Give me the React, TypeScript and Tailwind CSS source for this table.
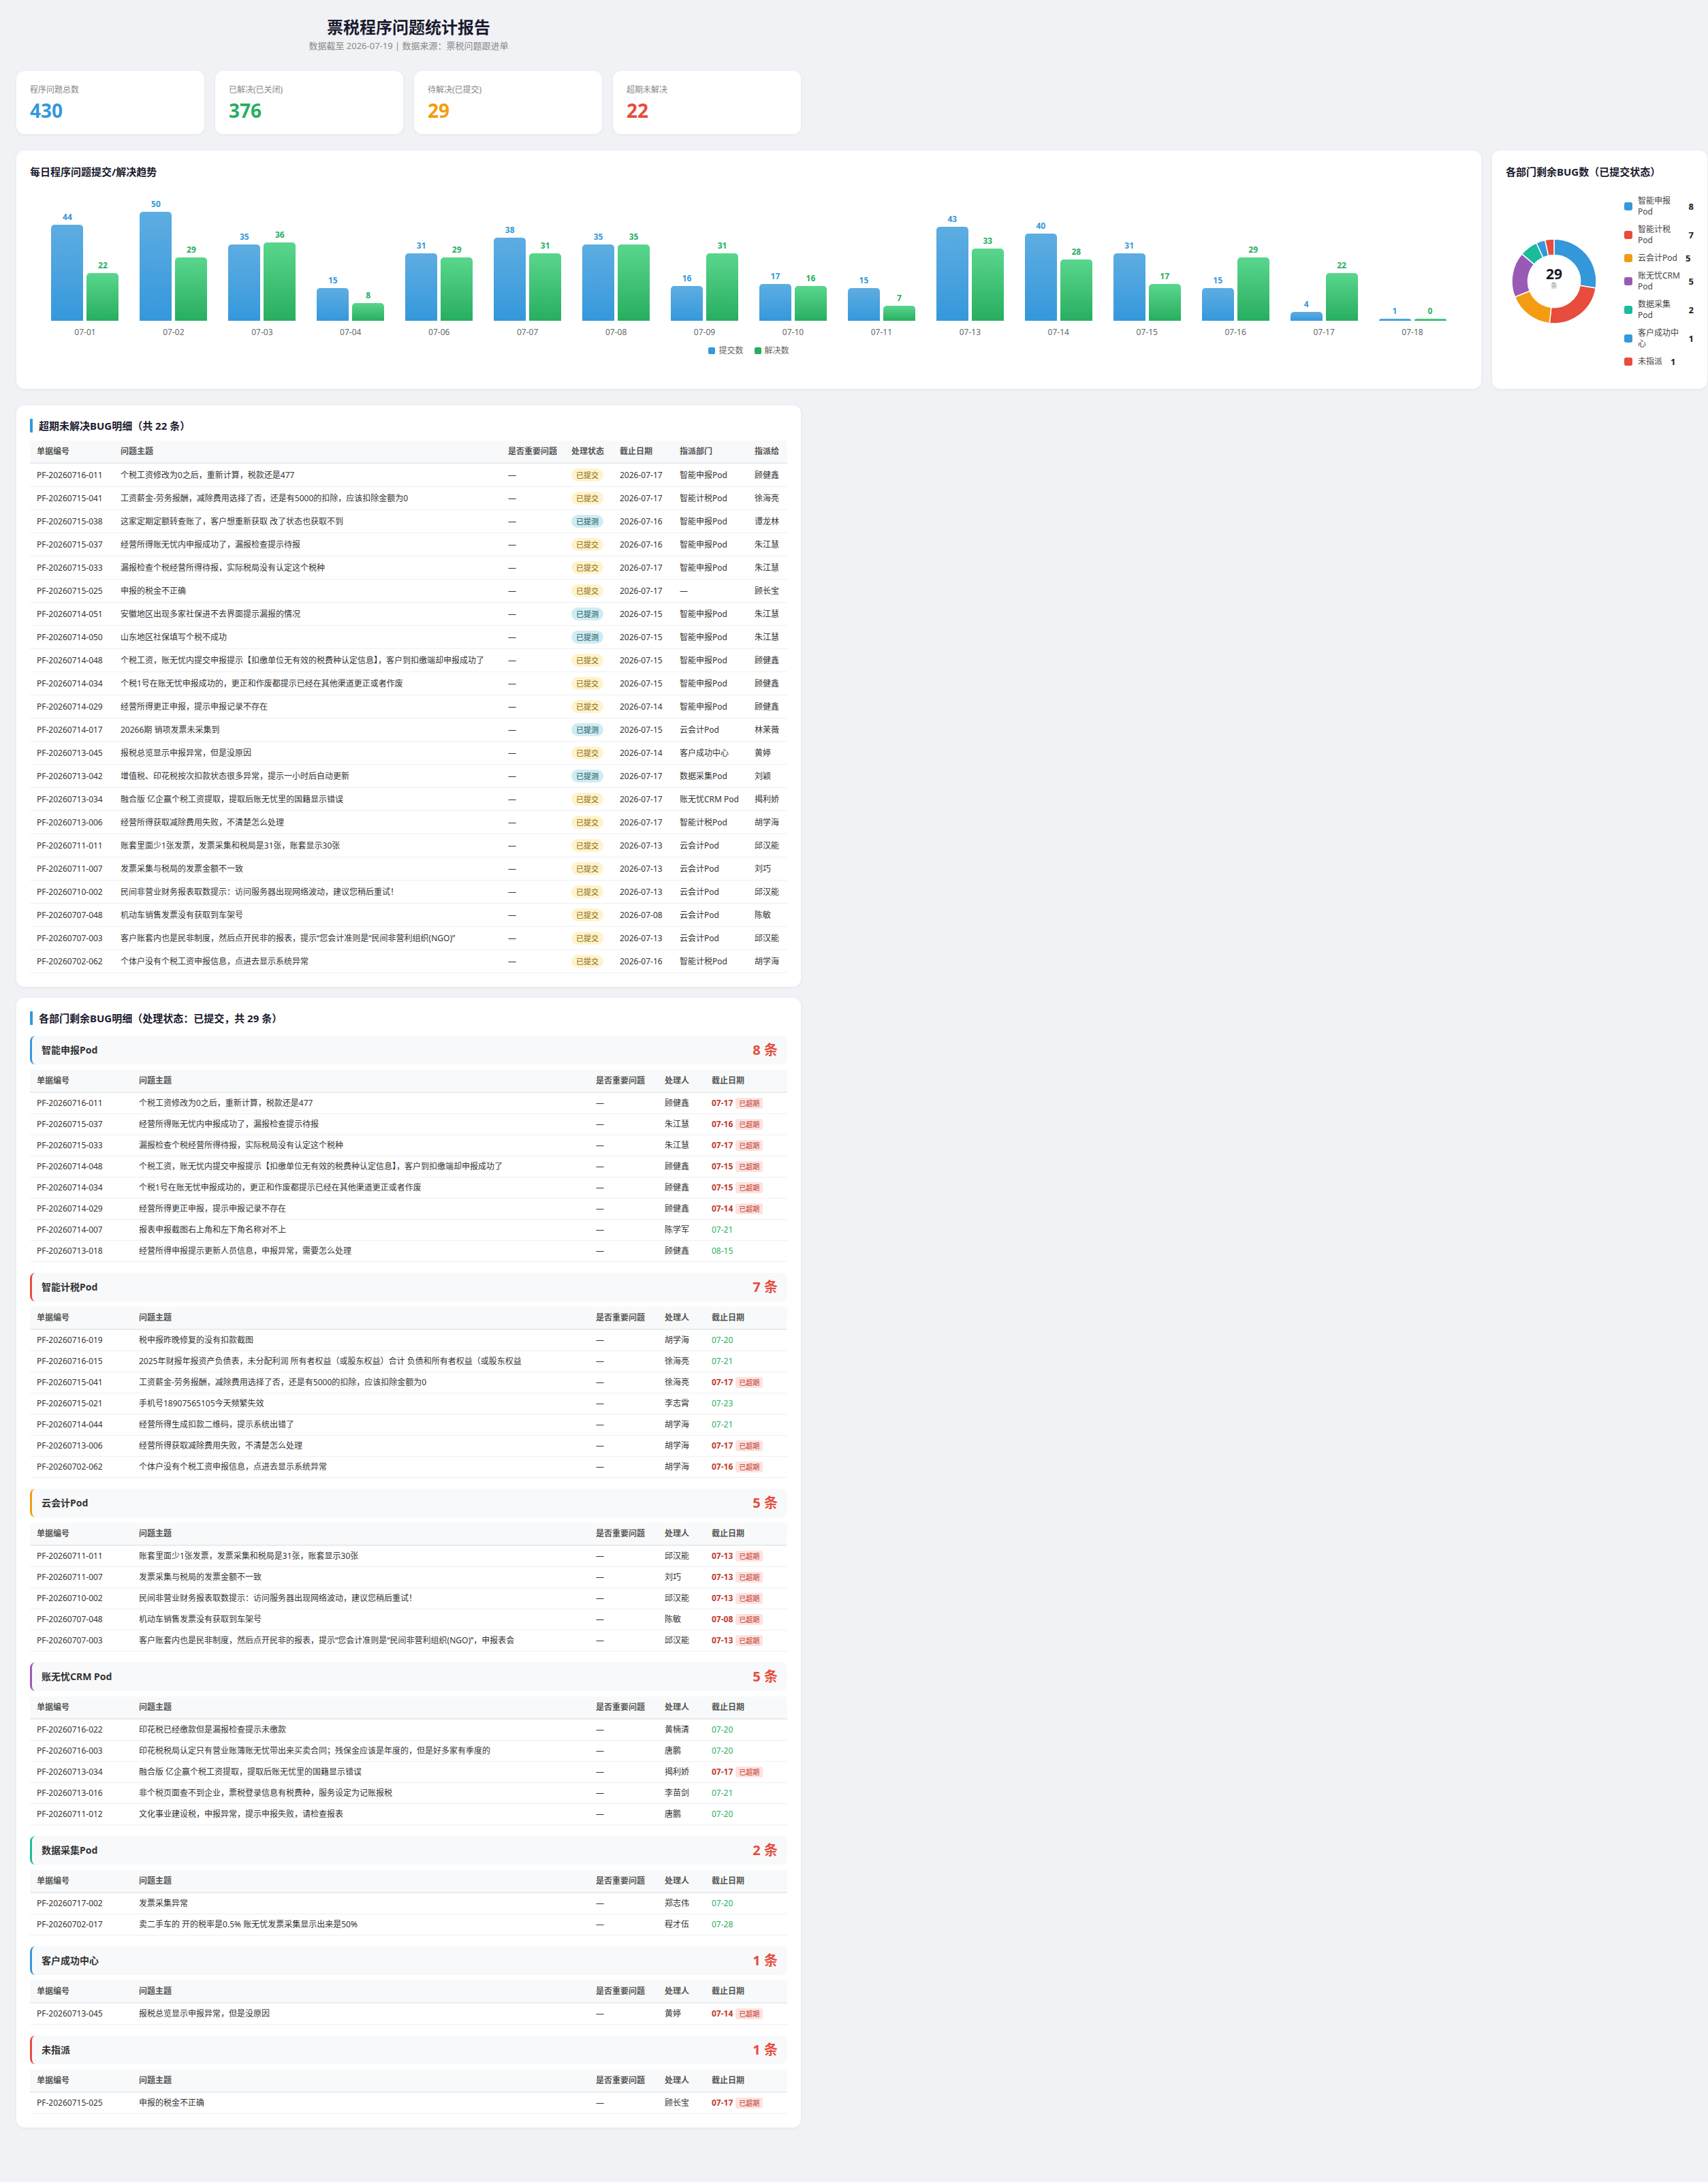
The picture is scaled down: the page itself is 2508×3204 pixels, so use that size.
import React from "react";

type ChartRow = [string, number, number];
const chartData: ChartRow[] = [
  ["07-01", 44, 22],
  ["07-02", 50, 29],
  ["07-03", 35, 36],
  ["07-04", 15, 8],
  ["07-06", 31, 29],
  ["07-07", 38, 31],
  ["07-08", 35, 35],
  ["07-09", 16, 31],
  ["07-10", 17, 16],
  ["07-11", 15, 7],
  ["07-13", 43, 33],
  ["07-14", 40, 28],
  ["07-15", 31, 17],
  ["07-16", 15, 29],
  ["07-17", 4, 22],
  ["07-18", 1, 0],
];

const depts = [
  { name: "智能申报Pod", count: 8, color: "#3498db" },
  { name: "智能计税Pod", count: 7, color: "#e74c3c" },
  { name: "云会计Pod", count: 5, color: "#f39c12" },
  { name: "账无忧CRM Pod", count: 5, color: "#9b59b6" },
  { name: "数据采集Pod", count: 2, color: "#1abc9c" },
  { name: "客户成功中心", count: 1, color: "#3498db" },
  { name: "未指派", count: 1, color: "#e74c3c" },
];

type OverRow = [string, string, "已提交" | "已提测", string, string, string];
const overdue: OverRow[] = [
  ["PF-20260716-011", "个税工资修改为0之后，重新计算，税款还是477", "已提交", "2026-07-17", "智能申报Pod", "顾健鑫"],
  ["PF-20260715-041", "工资薪金-劳务报酬，减除费用选择了否，还是有5000的扣除，应该扣除金额为0", "已提交", "2026-07-17", "智能计税Pod", "徐海亮"],
  ["PF-20260715-038", "这家定期定额转查账了，客户想重新获取 改了状态也获取不到", "已提测", "2026-07-16", "智能申报Pod", "谭龙林"],
  ["PF-20260715-037", "经营所得账无忧内申报成功了，漏报检查提示待报", "已提交", "2026-07-16", "智能申报Pod", "朱江慧"],
  ["PF-20260715-033", "漏报检查个税经营所得待报，实际税局没有认定这个税种", "已提交", "2026-07-17", "智能申报Pod", "朱江慧"],
  ["PF-20260715-025", "申报的税金不正确", "已提交", "2026-07-17", "—", "顾长宝"],
  ["PF-20260714-051", "安徽地区出现多家社保进不去界面提示漏报的情况", "已提测", "2026-07-15", "智能申报Pod", "朱江慧"],
  ["PF-20260714-050", "山东地区社保填写个税不成功", "已提测", "2026-07-15", "智能申报Pod", "朱江慧"],
  ["PF-20260714-048", "个税工资，账无忧内提交申报提示【扣缴单位无有效的税费种认定信息】，客户到扣缴端却申报成功了", "已提交", "2026-07-15", "智能申报Pod", "顾健鑫"],
  ["PF-20260714-034", "个税1号在账无忧申报成功的，更正和作废都提示已经在其他渠道更正或者作废", "已提交", "2026-07-15", "智能申报Pod", "顾健鑫"],
  ["PF-20260714-029", "经营所得更正申报，提示申报记录不存在", "已提交", "2026-07-14", "智能申报Pod", "顾健鑫"],
  ["PF-20260714-017", "20266期 销项发票未采集到", "已提测", "2026-07-15", "云会计Pod", "林茉薇"],
  ["PF-20260713-045", "报税总览显示申报异常，但是没原因", "已提交", "2026-07-14", "客户成功中心", "黄婷"],
  ["PF-20260713-042", "增值税、印花税按次扣款状态很多异常，提示一小时后自动更新", "已提测", "2026-07-17", "数据采集Pod", "刘颖"],
  ["PF-20260713-034", "融合版 亿企赢个税工资提取，提取后账无忧里的国籍显示错误", "已提交", "2026-07-17", "账无忧CRM Pod", "揭利娇"],
  ["PF-20260713-006", "经营所得获取减除费用失败，不清楚怎么处理", "已提交", "2026-07-17", "智能计税Pod", "胡学海"],
  ["PF-20260711-011", "账套里面少1张发票，发票采集和税局是31张，账套显示30张", "已提交", "2026-07-13", "云会计Pod", "邱汉能"],
  ["PF-20260711-007", "发票采集与税局的发票金额不一致", "已提交", "2026-07-13", "云会计Pod", "刘巧"],
  ["PF-20260710-002", "民间非营业财务报表取数提示：访问服务器出现网络波动，建议您稍后重试！", "已提交", "2026-07-13", "云会计Pod", "邱汉能"],
  ["PF-20260707-048", "机动车销售发票没有获取到车架号", "已提交", "2026-07-08", "云会计Pod", "陈敏"],
  ["PF-20260707-003", "客户账套内也是民非制度，然后点开民非的报表，提示“您会计准则是“民间非营利组织(NGO)”", "已提交", "2026-07-13", "云会计Pod", "邱汉能"],
  ["PF-20260702-062", "个体户没有个税工资申报信息，点进去显示系统异常", "已提交", "2026-07-16", "智能计税Pod", "胡学海"],
];

type GRow = [string, string, string, string, boolean];
const groups: { name: string; color: string; rows: GRow[] }[] = [
  {
    name: "智能申报Pod",
    color: "#3498db",
    rows: [
      ["PF-20260716-011", "个税工资修改为0之后，重新计算，税款还是477", "顾健鑫", "07-17", true],
      ["PF-20260715-037", "经营所得账无忧内申报成功了，漏报检查提示待报", "朱江慧", "07-16", true],
      ["PF-20260715-033", "漏报检查个税经营所得待报，实际税局没有认定这个税种", "朱江慧", "07-17", true],
      ["PF-20260714-048", "个税工资，账无忧内提交申报提示【扣缴单位无有效的税费种认定信息】，客户到扣缴端却申报成功了", "顾健鑫", "07-15", true],
      ["PF-20260714-034", "个税1号在账无忧申报成功的，更正和作废都提示已经在其他渠道更正或者作废", "顾健鑫", "07-15", true],
      ["PF-20260714-029", "经营所得更正申报，提示申报记录不存在", "顾健鑫", "07-14", true],
      ["PF-20260714-007", "报表申报截图右上角和左下角名称对不上", "陈学军", "07-21", false],
      ["PF-20260713-018", "经营所得申报提示更新人员信息，申报异常，需要怎么处理", "顾健鑫", "08-15", false],
    ],
  },
  {
    name: "智能计税Pod",
    color: "#e74c3c",
    rows: [
      ["PF-20260716-019", "税申报昨晚修复的没有扣款截图", "胡学海", "07-20", false],
      ["PF-20260716-015", "2025年财报年报资产负债表，未分配利润 所有者权益（或股东权益）合计 负债和所有者权益（或股东权益", "徐海亮", "07-21", false],
      ["PF-20260715-041", "工资薪金-劳务报酬，减除费用选择了否，还是有5000的扣除，应该扣除金额为0", "徐海亮", "07-17", true],
      ["PF-20260715-021", "手机号18907565105今天频繁失效", "李志霄", "07-23", false],
      ["PF-20260714-044", "经营所得生成扣款二维码，提示系统出错了", "胡学海", "07-21", false],
      ["PF-20260713-006", "经营所得获取减除费用失败，不清楚怎么处理", "胡学海", "07-17", true],
      ["PF-20260702-062", "个体户没有个税工资申报信息，点进去显示系统异常", "胡学海", "07-16", true],
    ],
  },
  {
    name: "云会计Pod",
    color: "#f39c12",
    rows: [
      ["PF-20260711-011", "账套里面少1张发票，发票采集和税局是31张，账套显示30张", "邱汉能", "07-13", true],
      ["PF-20260711-007", "发票采集与税局的发票金额不一致", "刘巧", "07-13", true],
      ["PF-20260710-002", "民间非营业财务报表取数提示：访问服务器出现网络波动，建议您稍后重试！", "邱汉能", "07-13", true],
      ["PF-20260707-048", "机动车销售发票没有获取到车架号", "陈敏", "07-08", true],
      ["PF-20260707-003", "客户账套内也是民非制度，然后点开民非的报表，提示“您会计准则是“民间非营利组织(NGO)”，申报表会", "邱汉能", "07-13", true],
    ],
  },
  {
    name: "账无忧CRM Pod",
    color: "#9b59b6",
    rows: [
      ["PF-20260716-022", "印花税已经缴款但是漏报检查提示未缴款", "黄楠清", "07-20", false],
      ["PF-20260716-003", "印花税税局认定只有营业账簿账无忧带出来买卖合同；残保金应该是年度的，但是好多家有季度的", "唐鹏", "07-20", false],
      ["PF-20260713-034", "融合版 亿企赢个税工资提取，提取后账无忧里的国籍显示错误", "揭利娇", "07-17", true],
      ["PF-20260713-016", "非个税页面查不到企业，票税登录信息有税费种，服务设定为记账报税", "李苗剑", "07-21", false],
      ["PF-20260711-012", "文化事业建设税，申报异常，提示申报失败，请检查报表", "唐鹏", "07-20", false],
    ],
  },
  {
    name: "数据采集Pod",
    color: "#1abc9c",
    rows: [
      ["PF-20260717-002", "发票采集异常", "郑志伟", "07-20", false],
      ["PF-20260702-017", "卖二手车的 开的税率是0.5% 账无忧发票采集显示出来是50%", "程才伍", "07-28", false],
    ],
  },
  {
    name: "客户成功中心",
    color: "#3498db",
    rows: [["PF-20260713-045", "报税总览显示申报异常，但是没原因", "黄婷", "07-14", true]],
  },
  {
    name: "未指派",
    color: "#e74c3c",
    rows: [["PF-20260715-025", "申报的税金不正确", "顾长宝", "07-17", true]],
  },
];

function Bar({ value, kind }: { value: number; kind: "blue" | "green" }) {
  const h = Math.max(value * 3.2, 3);
  return (
    <div className="flex w-[47px] flex-col items-center">
      <div
        className={
          kind === "blue"
            ? "mb-1 text-xs font-bold leading-[14px] text-[#3498db]"
            : "mb-1 text-xs font-bold leading-[14px] text-[#27ae60]"
        }
      >
        {value}
      </div>
      <div
        className={
          kind === "blue"
            ? "w-full rounded-t-[5px] bg-linear-to-b from-[#5dade2] to-[#3498db]"
            : "w-full rounded-t-[5px] bg-linear-to-b from-[#58d68d] to-[#27ae60]"
        }
        style={{ height: `${h}px` }}
      />
    </div>
  );
}

function arcPath(cx: number, cy: number, r0: number, r1: number, a0: number, a1: number) {
  const p = (r: number, a: number) => {
    const rad = (a * Math.PI) / 180;
    return [cx + r * Math.sin(rad), cy - r * Math.cos(rad)];
  };
  const large = a1 - a0 > 180 ? 1 : 0;
  const [x0, y0] = p(r1, a0);
  const [x1, y1] = p(r1, a1);
  const [x2, y2] = p(r0, a1);
  const [x3, y3] = p(r0, a0);
  return `M${x0} ${y0} A${r1} ${r1} 0 ${large} 1 ${x1} ${y1} L${x2} ${y2} A${r0} ${r0} 0 ${large} 0 ${x3} ${y3} Z`;
}

function Donut() {
  const total = depts.reduce((s, d) => s + d.count, 0);
  let acc = 0;
  return (
    <div className="relative h-[124px] w-[124px]">
      <svg width="124" height="124" viewBox="0 0 124 124">
        {depts.map((d) => {
          const a0 = (acc / total) * 360;
          acc += d.count;
          const a1 = (acc / total) * 360;
          return (
            <path
              key={d.name}
              d={arcPath(62, 62, 38.5, 62, a0, a1)}
              fill={d.color}
              stroke="#ffffff"
              strokeWidth="1.5"
            />
          );
        })}
      </svg>
      <div className="absolute inset-0 flex flex-col items-center justify-center pb-[10px]">
        <div className="text-[21px] font-bold leading-[22px] text-[#1a1a2e]">29</div>
        <div className="text-[10px] leading-[12px] text-[#999]">条</div>
      </div>
    </div>
  );
}

function StatusBadge({ s }: { s: string }) {
  return (
    <span
      className={
        s === "已提交"
          ? "inline-block h-[19px] rounded-full bg-[#fff3cd] px-[7px] align-top text-[11px] leading-[19px] text-[#856404]"
          : "inline-block h-[19px] rounded-full bg-[#d1ecf1] px-[7px] align-top text-[11px] leading-[19px] text-[#0c5460]"
      }
    >
      {s}
    </span>
  );
}

const thCls =
  "border-b-2 border-[#e9ecef] bg-[#f8f9fa] px-[10px] py-2 text-left text-xs font-semibold leading-4 text-[#555] whitespace-nowrap";
const td1 =
  "overflow-hidden whitespace-nowrap border-b border-[#f0f0f0] px-[10px] py-[7px] text-xs leading-[19px] text-[#333]";
const td2 =
  "overflow-hidden whitespace-nowrap border-b border-[#f0f0f0] px-[10px] py-[7px] text-xs leading-4 text-[#333]";

function SectionTitle({ children }: { children: React.ReactNode }) {
  return (
    <div className="border-l-4 border-[#3498db] pl-[9px] text-[15px] font-bold leading-5 text-[#1a1a2e]">
      {children}
    </div>
  );
}

export default function App() {
  return (
    <div className="min-h-screen overflow-hidden bg-[#f0f2f5] font-['Noto_Sans','Noto_Sans_CJK_SC',sans-serif]">
      <div className="p-6">
        <div className="w-[1152px]">
          {/* Header */}
          <div className="text-center">
            <div className="text-2xl font-bold leading-8 text-[#1a1a2e]">票税程序问题统计报告</div>
            <div className="mt-[2px] text-[13px] leading-[18px] text-[#888]">
              数据截至 2026-07-19 | 数据来源：票税问题跟进单
            </div>
          </div>

          {/* Stats */}
          <div className="mt-7 grid grid-cols-4 gap-4">
            {[
              { label: "程序问题总数", value: "430", cls: "text-[#3498db]" },
              { label: "已解决(已关闭)", value: "376", cls: "text-[#27ae60]" },
              { label: "待解决(已提交)", value: "29", cls: "text-[#f39c12]" },
              { label: "超期未解决", value: "22", cls: "text-[#e74c3c]" },
            ].map((c) => (
              <div
                key={c.label}
                className="rounded-xl bg-white px-5 pb-[18px] pt-5 shadow-[0_1px_4px_rgba(0,0,0,0.06)]"
              >
                <div className="text-xs leading-4 text-[#888]">{c.label}</div>
                <div className={"mt-[5px] text-[28px] font-bold leading-[34px] " + c.cls}>{c.value}</div>
              </div>
            ))}
          </div>

          {/* Charts row */}
          <div className="mt-6 flex gap-4">
            <div className="w-[2151px] shrink-0 rounded-xl bg-white p-5 shadow-[0_1px_4px_rgba(0,0,0,0.06)]">
              <div className="text-[15px] font-bold leading-[22px] text-[#1a1a2e]">每日程序问题提交/解决趋势</div>
              <div className="mx-4">
                <div className="flex h-[208px] items-end">
                  {chartData.map(([d, a, b]) => (
                    <div key={d} className="flex flex-1 items-end justify-center gap-[5px]">
                      <Bar value={a} kind="blue" />
                      <Bar value={b} kind="green" />
                    </div>
                  ))}
                </div>
                <div className="mt-[10px] flex">
                  {chartData.map(([d]) => (
                    <div key={d} className="flex-1 text-center text-xs leading-[14px] text-[#666]">
                      {d}
                    </div>
                  ))}
                </div>
                <div className="mb-7 mt-3 flex h-4 items-center justify-center gap-4">
                  <div className="flex items-center">
                    <span className="h-[10px] w-[10px] rounded-[2px] bg-[#3498db]" />
                    <span className="ml-[5px] text-xs leading-4 text-[#666]">提交数</span>
                  </div>
                  <div className="flex items-center">
                    <span className="h-[10px] w-[10px] rounded-[2px] bg-[#27ae60]" />
                    <span className="ml-[5px] text-xs leading-4 text-[#666]">解决数</span>
                  </div>
                </div>
              </div>
            </div>

            <div className="flex w-[316px] shrink-0 flex-col rounded-xl bg-white p-5 shadow-[0_1px_4px_rgba(0,0,0,0.06)]">
              <div className="whitespace-nowrap text-[15px] font-bold leading-[22px] text-[#1a1a2e]">
                各部门剩余BUG数（已提交状态）
              </div>
              <div className="mt-3 flex flex-1 items-center">
                <div className="flex w-[142px] shrink-0 justify-center">
                  <Donut />
                </div>
                <div className="ml-8 flex flex-col gap-[10px]">
                  {depts.map((d) => (
                    <div key={d.name} className="flex items-center">
                      <span className="h-3 w-3 shrink-0 rounded-[3px]" style={{ backgroundColor: d.color }} />
                      <span className="ml-2 max-w-[68px] text-xs leading-4 text-[#444]">{d.name}</span>
                      <span className="ml-[12px] shrink-0 text-[13px] font-bold leading-4 text-[#222]">{d.count}</span>
                    </div>
                  ))}
                </div>
              </div>
            </div>
          </div>

          {/* Overdue table */}
          <div className="mt-6 rounded-xl bg-white p-5 shadow-[0_1px_4px_rgba(0,0,0,0.06)]">
            <SectionTitle>超期未解决BUG明细（共 22 条）</SectionTitle>
            <table className="mt-3 w-full table-fixed border-separate border-spacing-0">
              <colgroup>
                <col className="w-[123px]" />
                <col className="w-[569px]" />
                <col className="w-[93px]" />
                <col className="w-[71px]" />
                <col className="w-[88px]" />
                <col className="w-[110px]" />
                <col className="w-[58px]" />
              </colgroup>
              <thead>
                <tr>
                  <th className={thCls}>单据编号</th>
                  <th className={thCls}>问题主题</th>
                  <th className={thCls}>是否重要问题</th>
                  <th className={thCls}>处理状态</th>
                  <th className={thCls}>截止日期</th>
                  <th className={thCls}>指派部门</th>
                  <th className={thCls}>指派给</th>
                </tr>
              </thead>
              <tbody>
                {overdue.map((r) => (
                  <tr key={r[0]}>
                    <td className={td1}>{r[0]}</td>
                    <td className={td1}>{r[1]}</td>
                    <td className={td1}>—</td>
                    <td className={td1}>
                      <StatusBadge s={r[2]} />
                    </td>
                    <td className={td1}>{r[3]}</td>
                    <td className={td1}>{r[4]}</td>
                    <td className={td1}>{r[5]}</td>
                  </tr>
                ))}
              </tbody>
            </table>
          </div>

          {/* Department detail */}
          <div className="mt-4 rounded-xl bg-white p-5 shadow-[0_1px_4px_rgba(0,0,0,0.06)]">
            <SectionTitle>各部门剩余BUG明细（处理状态：已提交，共 29 条）</SectionTitle>
            <div className="mt-4 flex flex-col gap-4">
              {groups.map((g) => (
                <div key={g.name}>
                  <div
                    className="flex h-[42px] items-center justify-between rounded-lg border-l-[3px] bg-[#f8f9fa] pl-[14px] pr-[14px]"
                    style={{ borderLeftColor: g.color }}
                  >
                    <span className="text-sm font-bold text-[#333]">{g.name}</span>
                    <span className="text-[20px] font-bold leading-6 text-[#e74c3c]">{g.rows.length} 条</span>
                  </div>
                  <table className="mt-2 w-full table-fixed border-separate border-spacing-0">
                    <colgroup>
                      <col className="w-[150px]" />
                      <col className="w-[671px]" />
                      <col className="w-[101px]" />
                      <col className="w-[69px]" />
                      <col className="w-[121px]" />
                    </colgroup>
                    <thead>
                      <tr>
                        <th className={thCls}>单据编号</th>
                        <th className={thCls}>问题主题</th>
                        <th className={thCls}>是否重要问题</th>
                        <th className={thCls}>处理人</th>
                        <th className={thCls}>截止日期</th>
                      </tr>
                    </thead>
                    <tbody>
                      {g.rows.map((r) => (
                        <tr key={r[0]}>
                          <td className={td2}>{r[0]}</td>
                          <td className={td2}>{r[1]}</td>
                          <td className={td2}>—</td>
                          <td className={td2}>{r[2]}</td>
                          <td className={td2}>
                            {r[4] ? (
                              <>
                                <span className="font-bold text-[#c0392b]">{r[3]}</span>
                                <span className="ml-1 inline-block h-4 rounded-[3px] bg-[#fde2e0] px-[5px] align-top text-[10px] leading-4 text-[#c0392b]">
                                  已超期
                                </span>
                              </>
                            ) : (
                              <span className="text-[#27ae60]">{r[3]}</span>
                            )}
                          </td>
                        </tr>
                      ))}
                    </tbody>
                  </table>
                </div>
              ))}
            </div>
          </div>
        </div>
      </div>
    </div>
  );
}
